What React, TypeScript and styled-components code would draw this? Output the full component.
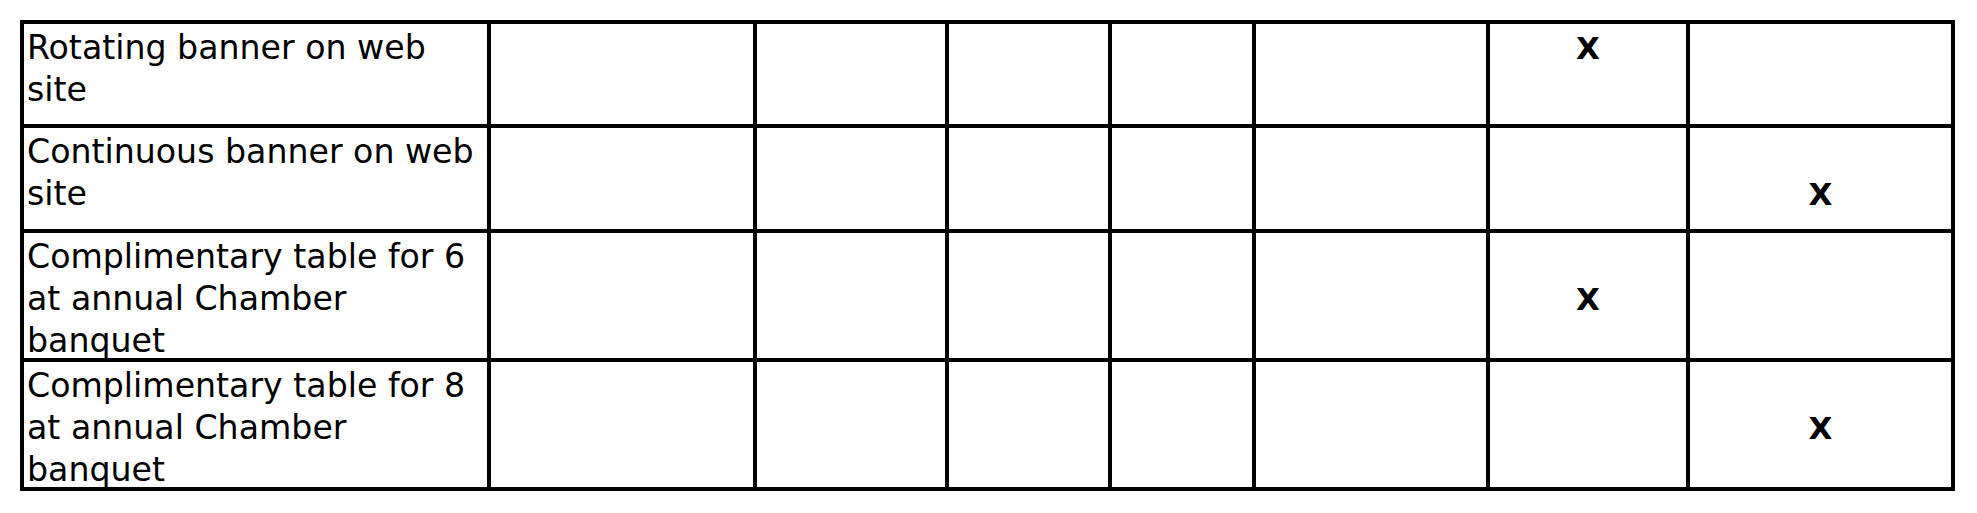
import styled, { createGlobalStyle } from "styled-components";

const GlobalStyle = createGlobalStyle`
  html, body {
    margin: 0;
    background: #fff;
  }
`;

const Page = styled.div`
  padding: 20px 0 0 20px;
`;

const Sheet = styled.table`
  border-collapse: collapse;
  table-layout: fixed;
  border: 4px solid #000;
  font-family: "DejaVu Sans", Verdana, sans-serif;
  color: #000;
`;

const Row = styled.tr<{ $h: number }>`
  height: ${(p) => p.$h}px;
`;

const Label = styled.td`
  border: 4px solid #000;
  padding: 3px 2px 0 3px;
  vertical-align: top;
  font-size: 33.2px;
  line-height: 42px;
  white-space: nowrap;
  overflow: hidden;
`;

const Lines = styled.div`
  margin-bottom: -8px;
`;

const Slot = styled.td<{ $line: number }>`
  border: 4px solid #000;
  padding: ${(p) => 3 + (p.$line - 1) * 42}px 0 0;
  vertical-align: top;
  text-align: center;
  font-size: 31px;
  font-weight: bold;
  line-height: 42px;
`;

const widths = [467, 266, 192, 163, 144, 234, 200, 265];

type Item = { lines: string[]; height: number; mark: number; line: number };

const items: Item[] = [
  { lines: ["Rotating banner on web", "site"], height: 104, mark: 6, line: 1 },
  { lines: ["Continuous banner on web", "site"], height: 105, mark: 7, line: 2 },
  {
    lines: ["Complimentary table for 6", "at annual Chamber", "banquet"],
    height: 129,
    mark: 6,
    line: 2,
  },
  {
    lines: ["Complimentary table for 8", "at annual Chamber", "banquet"],
    height: 129,
    mark: 7,
    line: 2,
  },
];

export default function App() {
  return (
    <>
      <GlobalStyle />
      <Page>
        <Sheet>
          <colgroup>
            {widths.map((w, i) => (
              <col key={i} style={{ width: w }} />
            ))}
          </colgroup>
          <tbody>
            {items.map((item, r) => (
              <Row key={r} $h={item.height}>
                <Label>
                  <Lines>
                    {item.lines.map((l, i) => (
                      <div key={i}>{l}</div>
                    ))}
                  </Lines>
                </Label>
                {widths.slice(1).map((_, c) => (
                  <Slot key={c} $line={item.line}>
                    {c + 1 === item.mark ? "X" : ""}
                  </Slot>
                ))}
              </Row>
            ))}
          </tbody>
        </Sheet>
      </Page>
    </>
  );
}
